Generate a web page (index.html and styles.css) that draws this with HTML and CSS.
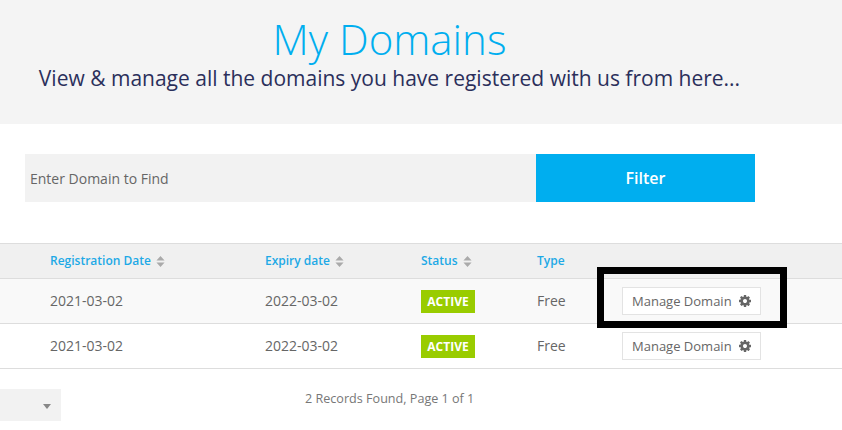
FILE: index.html
```html
<!DOCTYPE html>
<html lang="en">
<head>
<meta charset="utf-8">
<title>My Domains</title>
<link rel="stylesheet" href="styles.css">
</head>
<body>
<header class="hero">
  <h1 class="hero-title">My Domains</h1>
  <p class="hero-sub">View &amp; manage all the domains you have registered with us from here...</p>
</header>
<form class="filter">
  <div class="filter-input">Enter Domain to Find</div>
  <div class="filter-btn">Filter</div>
</form>
<table class="domains">
  <thead>
    <tr>
      <th class="c1">Registration Date <svg class="sort" viewBox="0 0 10 12"><path d="M5 0l4.5 5h-9zM5 12L.5 7h9z"/></svg></th>
      <th class="c2">Expiry date <svg class="sort" viewBox="0 0 10 12"><path d="M5 0l4.5 5h-9zM5 12L.5 7h9z"/></svg></th>
      <th class="c3">Status <svg class="sort" viewBox="0 0 10 12"><path d="M5 0l4.5 5h-9zM5 12L.5 7h9z"/></svg></th>
      <th class="c4">Type</th>
      <th></th>
    </tr>
  </thead>
  <tbody>
    <tr class="odd">
      <td class="c1">2021-03-02</td>
      <td class="c2">2022-03-02</td>
      <td class="c3"><span class="badge">ACTIVE</span></td>
      <td class="c4">Free</td>
      <td><span class="manage">Manage Domain <svg class="gear" viewBox="0 0 1792 1792"><path d="M1152 896q0-106-75-181t-181-75-181 75-75 181 75 181 181 75 181-75 75-181zm512-109v222q0 12-8 23t-20 13l-185 28q-19 54-39 91 35 50 107 138 10 12 10 25t-9 23q-27 37-99 108t-94 71q-12 0-26-9l-138-108q-44 23-91 38-16 136-29 186-7 28-36 28h-222q-14 0-24.5-8.5t-11.5-21.5l-28-184q-49-16-90-37l-141 107q-10 9-25 9-14 0-25-11-126-114-165-168-7-10-7-23 0-12 8-23 15-21 51-66.5t54-70.5q-27-50-41-99l-183-27q-13-2-21-12.5t-8-23.5v-222q0-12 8-23t19-13l186-28q14-46 39-92-40-57-107-138-10-12-10-24 0-10 9-23 26-36 98.5-107.5t94.5-71.5q13 0 26 10l138 107q44-23 91-38 16-136 29-186 7-28 36-28h222q14 0 24.5 8.5t11.5 21.5l28 184q49 16 90 37l142-107q9-9 24-9 13 0 25 10 129 119 165 170 7 8 7 22 0 12-8 23-15 21-51 66.5t-54 70.5q26 50 41 98l183 28q13 2 21 12.5t8 23.5z"/></svg></span></td>
    </tr>
    <tr>
      <td class="c1">2021-03-02</td>
      <td class="c2">2022-03-02</td>
      <td class="c3"><span class="badge">ACTIVE</span></td>
      <td class="c4">Free</td>
      <td><span class="manage">Manage Domain <svg class="gear" viewBox="0 0 1792 1792"><path d="M1152 896q0-106-75-181t-181-75-181 75-75 181 75 181 181 75 181-75 75-181zm512-109v222q0 12-8 23t-20 13l-185 28q-19 54-39 91 35 50 107 138 10 12 10 25t-9 23q-27 37-99 108t-94 71q-12 0-26-9l-138-108q-44 23-91 38-16 136-29 186-7 28-36 28h-222q-14 0-24.5-8.5t-11.5-21.5l-28-184q-49-16-90-37l-141 107q-10 9-25 9-14 0-25-11-126-114-165-168-7-10-7-23 0-12 8-23 15-21 51-66.5t54-70.5q-27-50-41-99l-183-27q-13-2-21-12.5t-8-23.5v-222q0-12 8-23t19-13l186-28q14-46 39-92-40-57-107-138-10-12-10-24 0-10 9-23 26-36 98.5-107.5t94.5-71.5q13 0 26 10l138 107q44-23 91-38 16-136 29-186 7-28 36-28h222q14 0 24.5 8.5t11.5 21.5l28 184q49 16 90 37l142-107q9-9 24-9 13 0 25 10 129 119 165 170 7 8 7 22 0 12-8 23-15 21-51 66.5t-54 70.5q26 50 41 98l183 28q13 2 21 12.5t8 23.5z"/></svg></span></td>
    </tr>
  </tbody>
</table>
<footer class="pager">
  <div class="page-select"><span class="caret"></span></div>
  <div class="records">2 Records Found, Page 1 of 1</div>
</footer>
<div class="highlight"></div>
</body>
</html>
```

FILE: styles.css
```css
* { box-sizing: border-box; }
html, body { margin: 0; padding: 0; }
body {
  position: relative;
  height: 430px;
  overflow: hidden;
  background: #fff;
  font-family: "Open Sans", sans-serif;
  color: #666;
}
.hero {
  height: 124px;
  background: #f4f4f4;
  padding-top: 12px;
}
.hero-title {
  margin: 0;
  width: 779px;
  text-align: center;
  font-size: 42px;
  line-height: 53px;
  font-weight: 300;
  color: #00aeef;
}
.hero-sub {
  margin: 0;
  width: 779px;
  text-align: center;
  font-size: 21px;
  line-height: 26px;
  font-weight: 400;
  color: #2b2f5b;
}
.filter {
  display: flex;
  margin: 30px 0 0 25px;
  height: 48px;
  width: 730px;
}
.filter-input {
  flex: 1;
  background: #f2f2f2;
  padding-left: 5px;
  font-size: 14px;
  line-height: 49px;
  color: #666;
}
.filter-btn {
  width: 219px;
  background: #00aeef;
  color: #fff;
  text-align: center;
  font-size: 16px;
  font-weight: 600;
  line-height: 48px;
}
.domains {
  width: 842px;
  margin-top: 41px;
  border-collapse: collapse;
  table-layout: fixed;
}
.domains th {
  height: 35px;
  padding: 0 0 2px;
  background: #f0f0f0;
  border-top: 1px solid #ddd;
  border-bottom: 1px solid #ddd;
  text-align: left;
  font-size: 12px;
  font-weight: 600;
  color: #1da9e6;
}
.domains td {
  height: 45px;
  padding: 0 0 1px;
  border-bottom: 1px solid #ddd;
  font-size: 14px;
  color: #666;
}
.odd td { background: #f9f9f9; }
.c1 { width: 265px; padding-left: 50px !important; }
.c2 { width: 156px; }
.c3 { width: 116px; }
.c4 { width: 85px; }
.sort {
  width: 9px;
  height: 11px;
  margin-left: 2px;
  vertical-align: -2px;
  fill: #aaa;
}
.badge {
  display: block;
  width: 54px;
  height: 23px;
  margin-top: 1px;
  background: #9c0;
  color: #fff;
  text-align: center;
  font-size: 12px;
  font-weight: 700;
  line-height: 23px;
}
.manage {
  display: flex;
  align-items: center;
  width: 139px;
  height: 28px;
  margin-top: 1px;
  padding-left: 9px;
  background: #fff;
  border: 1px solid #e3e3e3;
  font-size: 13px;
  white-space: pre;
}
.gear {
  width: 14px;
  height: 14px;
  margin-left: 3px;
  fill: #666;
}
.pager {
  display: flex;
  margin-top: 20px;
}
.page-select {
  position: relative;
  width: 61px;
  height: 32px;
  background: #f2f2f2;
}
.caret {
  position: absolute;
  left: 43px;
  top: 15px;
  border-left: 4.5px solid transparent;
  border-right: 4.5px solid transparent;
  border-top: 5px solid #888;
}
.records {
  margin: 1px 0 0 244px;
  font-size: 12.6px;
  line-height: 18px;
  color: #777;
}
.highlight {
  position: absolute;
  left: 597px;
  top: 267px;
  width: 190px;
  height: 61px;
  border: 7px solid #000;
}
```
